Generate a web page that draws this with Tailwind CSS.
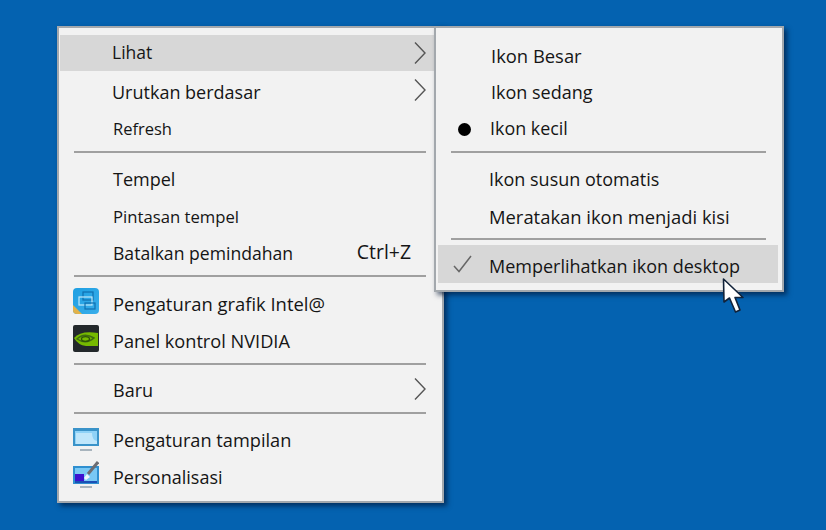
<!doctype html>
<html><head><meta charset="utf-8"><script src="https://cdn.jsdelivr.net/npm/@tailwindcss/browser@4"></script></head>
<body class="m-0">
<div class="relative w-[826px] h-[530px] overflow-hidden bg-[#0462b0] text-[#151515] font-['Open_Sans',sans-serif] text-[18px] leading-none">

<!-- main menu -->
<div class="absolute left-[57px] top-[26px] w-[387px] h-[477px] box-border bg-[#f2f2f2] border-2 border-[#a3a8ad] shadow-[3px_3px_5px_rgba(0,20,50,0.65)] pt-[7px] flex flex-col">
  <div class="h-9 mx-[1px] flex items-center justify-between bg-[#d7d7d7] pl-[52px] pr-[15px] text-[17.5px]"><span>Lihat</span>
    <svg width="12" height="22" viewBox="0 0 12 22" fill="none" stroke="#555" stroke-width="1.4"><path d="M1 0.5 L11 11 L1 21.5"/></svg></div>
  <div class="h-9 mt-[3px] mx-[1px] flex items-center justify-between pl-[52px] pr-[15px]"><span>Urutkan berdasar</span>
    <svg class="relative -top-[2px]" width="12" height="22" viewBox="0 0 12 22" fill="none" stroke="#555" stroke-width="1.4"><path d="M1 0.5 L11 11 L1 21.5"/></svg></div>
  <div class="h-9 mt-[1px] mx-[1px] flex items-center pl-[53px] text-[16.5px]">Refresh</div>
  <div class="h-[2px] mt-[4px] ml-[15px] mr-[16px] bg-[#a0a0a0]"></div>
  <div class="h-9 mt-[8px] mx-[1px] flex items-center pl-[53px]">Tempel</div>
  <div class="h-9 mt-[2px] mx-[1px] flex items-center pl-[53px] text-[16.7px]">Pintasan tempel</div>
  <div class="h-9 mt-[1px] mx-[1px] flex items-center justify-between pl-[53px] pr-[30px] text-[17.6px]"><span>Batalkan pemindahan</span><span class="relative -top-[2px] text-[19.4px]">Ctrl+Z</span></div>
  <div class="h-[2px] mt-[3px] ml-[15px] mr-[16px] bg-[#a0a0a0]"></div>
  <div class="h-9 mt-[9px] mx-[1px] flex items-center pl-[13px] gap-[14px] text-[18.4px]">
    <svg class="relative -top-[3px]" width="26" height="26" viewBox="0 0 26 26"><defs><linearGradient id="ig" x1="0" y1="0" x2="1" y2="1"><stop offset="0" stop-color="#1e9fe2"/><stop offset="1" stop-color="#3aaeea"/></linearGradient></defs><rect width="26" height="26" rx="4" fill="url(#ig)"/><path d="M0 17 L9 26 L4 26 Q0 26 0 22Z" fill="#e2b24a"/><rect x="10" y="4" width="10" height="8" fill="none" stroke="#0f6fb0" stroke-width="1.2"/><rect x="6" y="9" width="13" height="8" fill="none" stroke="#bfe8fb" stroke-width="1.2"/><rect x="12" y="15" width="10" height="6" fill="none" stroke="#0f6fb0" stroke-width="1.2"/></svg>
    <span>Pengaturan grafik Intel@</span></div>
  <div class="h-9 mt-[1px] mx-[1px] flex items-center pl-[13px] gap-[14px] text-[18.2px]">
    <svg class="relative -top-[3px]" width="26" height="27" viewBox="0 0 26 27"><rect width="26" height="27" rx="2" fill="#23282b"/><path d="M1 13 Q8 5 25 8 V21 H13 Q5 20 1 13Z" fill="#76b900"/><path d="M4 14 Q11 7 21 13 Q13 20 4 14Z" fill="none" stroke="#3f6b10" stroke-width="1.5"/><ellipse cx="12.5" cy="14" rx="4" ry="2.4" fill="none" stroke="#2f5508" stroke-width="1.4"/></svg>
    <span>Panel kontrol NVIDIA</span></div>
  <div class="h-[2px] mt-[4px] ml-[15px] mr-[16px] bg-[#a0a0a0]"></div>
  <div class="h-9 mt-[7px] mx-[1px] flex items-center justify-between pl-[53px] pr-[15px]"><span>Baru</span>
    <svg class="relative -top-[1px]" width="12" height="22" viewBox="0 0 12 22" fill="none" stroke="#555" stroke-width="1.4"><path d="M1 0.5 L11 11 L1 21.5"/></svg></div>
  <div class="h-[2px] mt-[4px] ml-[15px] mr-[16px] bg-[#a0a0a0]"></div>
  <div class="h-9 mt-[8px] mx-[1px] flex items-center pl-[13px] gap-[14px] text-[18.2px]">
    <svg width="26" height="24" viewBox="0 0 26 24"><rect y="0" width="26" height="18" fill="#3a93c9"/><rect x="2" y="3" width="22" height="13" fill="#8fd2f7"/><path d="M3 15 V5 H19 Q19 12 24 13 V16 H3Z" fill="#bfe6fb"/><rect x="7" y="21" width="12" height="2" fill="#a8b4bd"/></svg>
    <span>Pengaturan tampilan</span></div>
  <div class="h-9 mx-[1px] flex items-center pl-[13px] gap-[14px] text-[18px]">
    <svg class="relative -top-[2px]" width="26" height="27" viewBox="0 0 26 27"><rect y="5" width="26" height="18" fill="#2f8fd0"/><rect x="2" y="7" width="22" height="13" fill="#79c8f5"/><rect x="2" y="13" width="9" height="7" fill="#3d12d0"/><rect x="2" y="20" width="22" height="2" fill="#1b4fb5"/><path d="M11 17 L14 13 L17 16 L13 19Z" fill="#eef7fc"/><path d="M15 13 L25 1" stroke="#6d6d72" stroke-width="3"/><rect x="7" y="25" width="12" height="2" fill="#a8b4bd"/></svg>
    <span class="relative top-[1px]">Personalisasi</span></div>
</div>

<!-- submenu -->
<div class="absolute left-[434px] top-[26px] w-[350px] h-[266px] box-border bg-[#f2f2f2] border-2 border-[#a3a8ad] shadow-[3px_3px_5px_rgba(0,20,50,0.65)] pt-[10px] flex flex-col">
  <div class="h-9 flex items-center pl-[55px] text-[18.4px]">Ikon Besar</div>
  <div class="h-9 flex items-center pl-[55px]">Ikon sedang</div>
  <div class="h-9 mt-[1px] flex items-center pl-[22px] gap-[19px] text-[17.9px]"><span class="w-[13px] h-[13px] rounded-full bg-black"></span><span>Ikon kecil</span></div>
  <div class="h-[2px] mt-[4px] ml-[15px] mr-[16px] bg-[#a0a0a0]"></div>
  <div class="h-9 mt-[8px] flex items-center pl-[53px]">Ikon susun otomatis</div>
  <div class="h-9 mt-[2px] flex items-center pl-[53px] text-[18.4px]">Meratakan ikon menjadi kisi</div>
  <div class="h-[2px] mt-[3px] ml-[15px] mr-[16px] bg-[#a0a0a0]"></div>
  <div class="h-[38px] mt-[5px] ml-[2px] mr-[4px] bg-[#d7d7d7] flex items-center pl-[15px] gap-[17px]">
    <svg width="19" height="18" viewBox="0 0 19 18" fill="none" stroke="#666" stroke-width="1.5"><path d="M1 11 L6 16.5 L18 1"/></svg>
    <span class="relative top-[2px]">Memperlihatkan ikon desktop</span></div>
</div>

<!-- cursor -->
<svg class="absolute left-[720px] top-[276px]" width="28" height="40" viewBox="0 0 28 40"><path d="M3.5 3 L4 26 L9.5 22 L15.5 36 L20 34 L15 21.5 L23 21.5 Z" fill="#fff" stroke="#12233a" stroke-width="1.6" stroke-linejoin="round"/></svg>
</div>
</body></html>
